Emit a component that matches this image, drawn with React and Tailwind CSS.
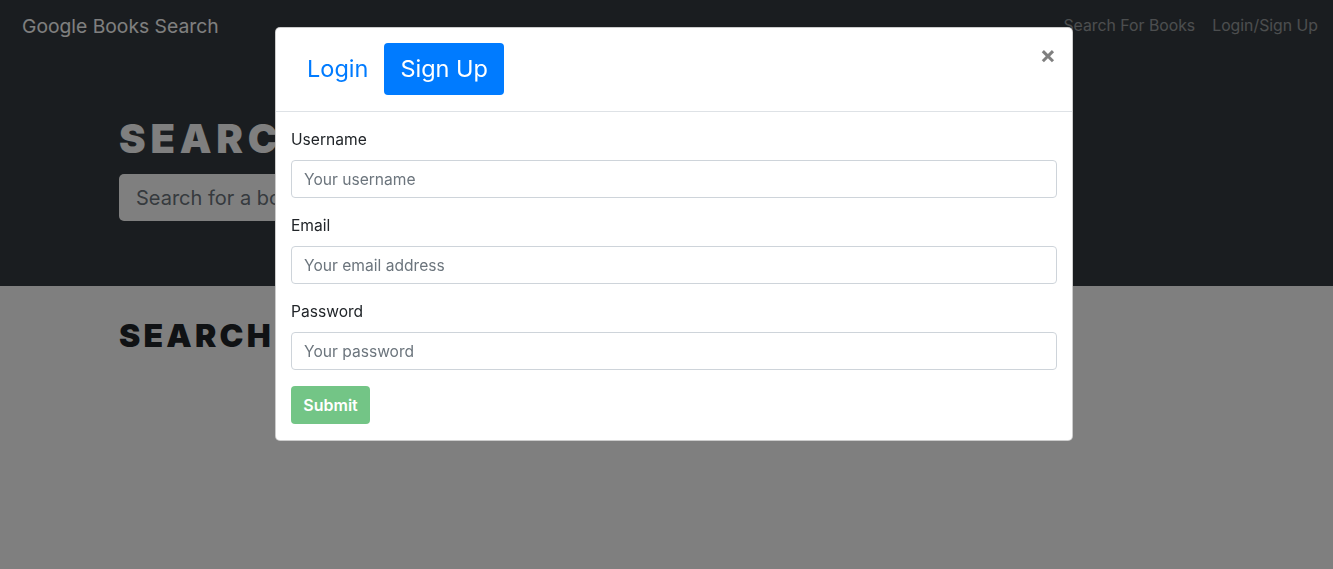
export default function App() {
    return (
        <div className="relative min-h-[569px] bg-white font-['Inter',sans-serif] text-[#212529]">
            <div className="bg-[#343a40]">
                <nav className="flex h-[52px] items-center justify-between pl-[22px] pr-[15px]">
                    <span className="text-[19.3px] text-white">Google Books Search</span>
                    <div className="flex gap-[17px] text-[15.8px] text-white/50">
                        <span>Search For Books</span>
                        <span>Login/Sign Up</span>
                    </div>
                </nav>
                <div className="pl-[119px] pt-[63px] pb-[65px]">
                    <h1 className="text-[40px] font-black uppercase leading-[48px] tracking-[0.12em] text-white">
                        Search for Books!
                    </h1>
                    <div className="mt-[11px] flex h-[47px] w-[760px] items-center rounded-[5px] bg-white px-[17px] text-[20px] text-[#6c757d]">
                        Search for a book
                    </div>
                </div>
            </div>
            <div className="pl-[119px] pt-[31px]">
                <h2 className="text-[32px] font-black uppercase leading-[38px] tracking-[0.1em]">
                    Search for a book to begin
                </h2>
            </div>

            <div className="fixed inset-0 bg-black/50">
                <div className="ml-[275px] mt-[27px] w-[798px] overflow-hidden rounded-[5px] border border-black/20 bg-white">
                    <div className="flex items-start border-b border-[#dee2e6] pl-[15px] pr-[16px] pt-[15px] pb-[16px]">
                        <div className="flex text-[23.5px] leading-[36px]">
                            <span className="rounded-[4px] px-[16px] py-[8px] text-[#007bff]">Login</span>
                            <span className="rounded-[4px] bg-[#007bff] px-[16px] py-[8px] text-white">Sign Up</span>
                        </div>
                        <span className="ml-auto text-[24px] font-bold leading-[24px] text-black/50">×</span>
                    </div>
                    <form className="flex flex-col px-[15px] pt-[16px] pb-[16px]">
                        {[
                            ["Username", "Your username"],
                            ["Email", "Your email address"],
                            ["Password", "Your password"],
                        ].map(([label, ph]) => (
                            <div key={label} className="mb-[16px]">
                                <label className="mb-[8px] block text-[15.6px] leading-[24px]">{label}</label>
                                <input
                                    placeholder={ph}
                                    className="block h-[38px] w-full rounded-[4px] border border-[#ced4da] px-[12px] text-[15.6px] placeholder:text-[#6c757d] focus:outline-none"
                                />
                            </div>
                        ))}
                        <button
                            type="button"
                            className="h-[38px] w-[79px] rounded-[4px] bg-[#28a745] text-[16px] font-semibold text-white opacity-65"
                        >
                            Submit
                        </button>
                    </form>
                </div>
            </div>
        </div>
    );
}
